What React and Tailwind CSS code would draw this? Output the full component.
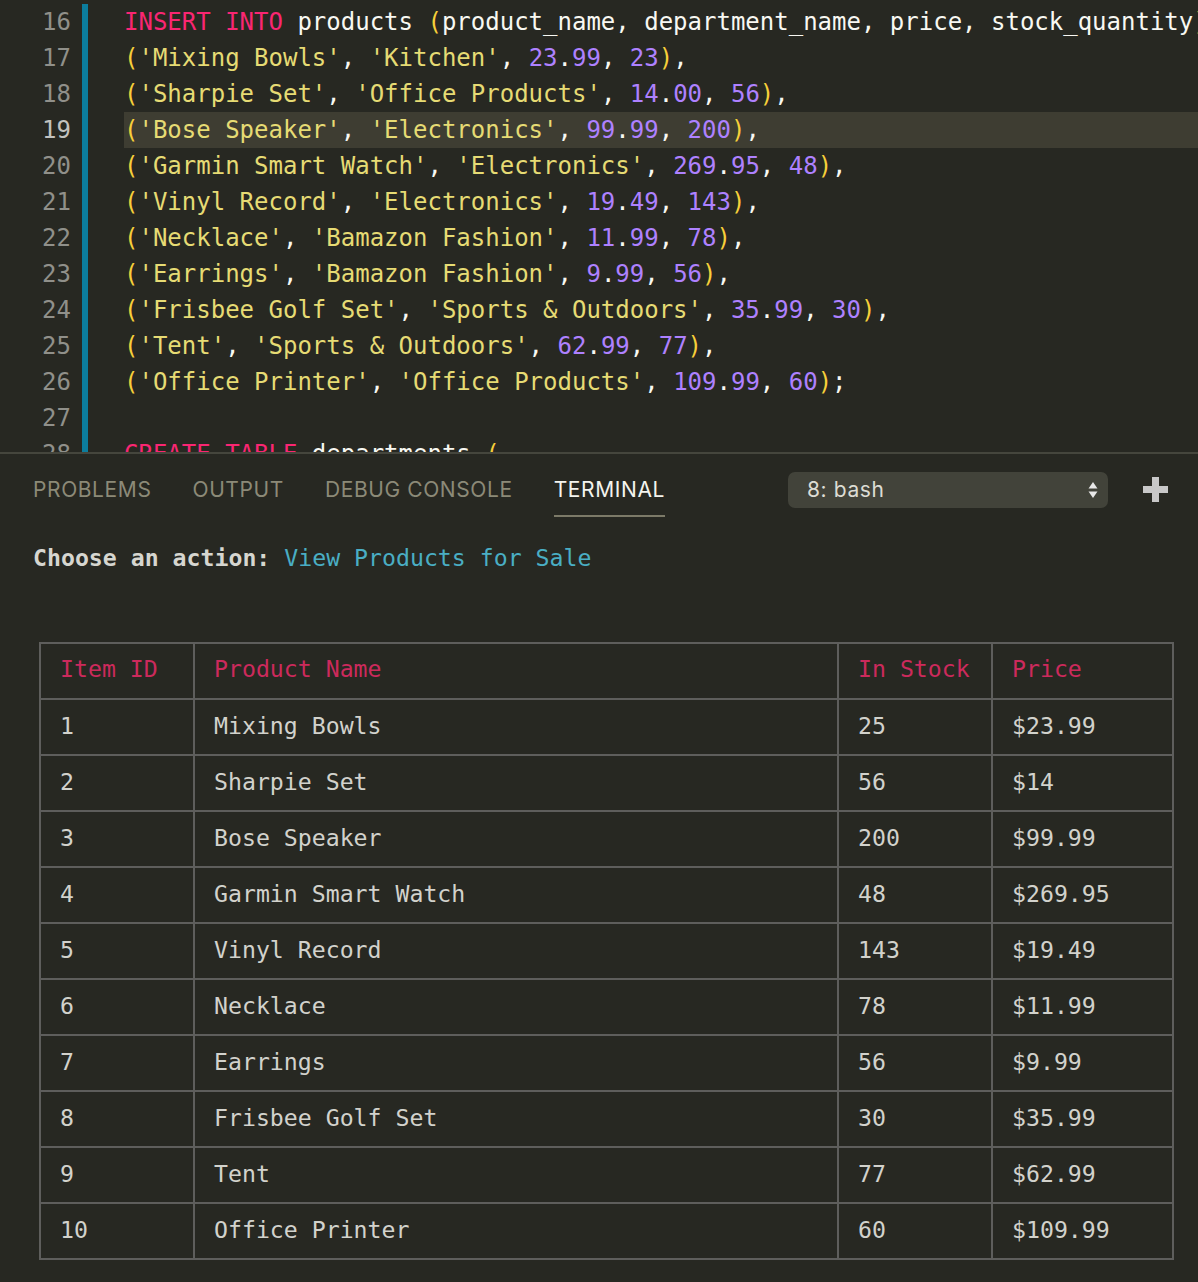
import React from "react";

const MONO = { fontFamily: '"DejaVu Sans Mono", "Liberation Mono", monospace' };
const SANS = { fontFamily: 'Inter, "Noto Sans", "Liberation Sans", sans-serif' };

const K = ({ children }) => <span className="text-[#f92672]">{children}</span>;
const W = ({ children }) => <span className="text-[#f8f8f2]">{children}</span>;
const P = ({ children }) => <span className="text-[#f6cf3a]">{children}</span>;
const S = ({ children }) => <span className="text-[#e6db74]">{children}</span>;
const N = ({ children }) => <span className="text-[#ae81ff]">{children}</span>;

function Num({ v }) {
  const [a, b] = v.split(".");
  return (
    <>
      <N>{a}</N>
      <W>.</W>
      <N>{b}</N>
    </>
  );
}

function Row({ name, dept, price, qty, last }) {
  return (
    <>
      <P>(</P>
      <S>'{name}'</S>
      <W>, </W>
      <S>'{dept}'</S>
      <W>, </W>
      <Num v={price} />
      <W>, </W>
      <N>{qty}</N>
      <P>)</P>
      <W>{last ? ";" : ","}</W>
    </>
  );
}

const rows = [
  ["Mixing Bowls", "Kitchen", "23.99", "23"],
  ["Sharpie Set", "Office Products", "14.00", "56"],
  ["Bose Speaker", "Electronics", "99.99", "200"],
  ["Garmin Smart Watch", "Electronics", "269.95", "48"],
  ["Vinyl Record", "Electronics", "19.49", "143"],
  ["Necklace", "Bamazon Fashion", "11.99", "78"],
  ["Earrings", "Bamazon Fashion", "9.99", "56"],
  ["Frisbee Golf Set", "Sports & Outdoors", "35.99", "30"],
  ["Tent", "Sports & Outdoors", "62.99", "77"],
  ["Office Printer", "Office Products", "109.99", "60"],
];

const codeLines = [
  <>
    <K>INSERT INTO</K>
    <W> products </W>
    <P>(</P>
    <W>product_name, department_name, price, stock_quantity</W>
    <P>)</P>
  </>,
  ...rows.map((r, i) => (
    <Row key={i} name={r[0]} dept={r[1]} price={r[2]} qty={r[3]} last={i === rows.length - 1} />
  )),
  <>{" "}</>,
  <>
    <K>CREATE TABLE</K>
    <W> departments </W>
    <P>(</P>
  </>,
];

const tableData = [
  ["1", "Mixing Bowls", "25", "$23.99"],
  ["2", "Sharpie Set", "56", "$14"],
  ["3", "Bose Speaker", "200", "$99.99"],
  ["4", "Garmin Smart Watch", "48", "$269.95"],
  ["5", "Vinyl Record", "143", "$19.49"],
  ["6", "Necklace", "78", "$11.99"],
  ["7", "Earrings", "56", "$9.99"],
  ["8", "Frisbee Golf Set", "30", "$35.99"],
  ["9", "Tent", "77", "$62.99"],
  ["10", "Office Printer", "60", "$109.99"],
];

export default function App() {
  return (
    <div className="w-[1198px] h-[1282px] bg-[#272822] overflow-hidden">
      {/* Editor */}
      <div className="h-[452px] overflow-hidden flex text-[24px] leading-[36px]" style={MONO}>
        <div className="w-[82px] shrink-0 pt-[4px] pr-[11px] text-right">
          {codeLines.map((_, i) => (
            <div key={i} className={`h-[36px] ${i === 3 ? "text-[#c2c2bf]" : "text-[#90908a]"}`}>
              {16 + i}
            </div>
          ))}
        </div>
        <div className="w-[6px] shrink-0 mt-[4px] bg-[#0c7d9d]" />
        <div className="w-[36px] shrink-0" />
        <div className="flex-1 min-w-0 pt-[4px]">
          {codeLines.map((l, i) => (
            <div
              key={i}
              className={`h-[36px] whitespace-pre ${i === 3 ? "bg-[#3e3d32]" : ""}`}
            >
              {l}
            </div>
          ))}
        </div>
      </div>
      <div className="h-[2px] bg-[#45463d]" />

      {/* Panel */}
      <div className="flex items-start pt-[18px] pl-[33px] pr-[30px]" style={SANS}>
        <div className="flex items-start gap-[41px] text-[21px] tracking-[0.6px] leading-[24px] text-[#8c8a78]">
          <div className="pt-[6px] pb-[14px]">PROBLEMS</div>
          <div className="pt-[6px] pb-[14px]">OUTPUT</div>
          <div className="pt-[6px] pb-[14px]">DEBUG CONSOLE</div>
          <div className="pt-[6px] pb-[13px] border-b-2 border-[#7c7a68] text-[#f4f4ee]">TERMINAL</div>
        </div>
        <div className="ml-auto w-[320px] h-[36px] rounded-[7px] bg-[#42433a] flex items-center pl-[19px] pr-[10px] text-[21px] tracking-[0.6px] text-[#dcdcd4]">
          <span>8: bash</span>
          <svg className="ml-auto" width="10" height="20" viewBox="0 0 10 20">
            <path d="M5 2 L9.5 8.5 L0.5 8.5 Z" fill="#e8e8e8" />
            <path d="M5 18 L9.5 11.5 L0.5 11.5 Z" fill="#e8e8e8" />
          </svg>
        </div>
        <div className="ml-[35px] mt-[5px] w-[25px] h-[25px] relative">
          <div className="absolute left-0 right-0 top-[9px] h-[7px] bg-[#c8c8c8]" />
          <div className="absolute top-0 bottom-0 left-[9px] w-[7px] bg-[#c8c8c8]" />
        </div>
      </div>

      {/* Terminal */}
      <div className="text-[23.2px]" style={MONO}>
        <div className="mt-[27px] pl-[33px] leading-[28px] h-[28px] whitespace-pre">
          <span className="font-bold text-[#d6d6d0]">Choose an action: </span>
          <span className="text-[#4aaec4]">View Products for Sale</span>
        </div>
        <div className="mt-[70px] ml-[39px]">
          <table className="border-collapse text-[#d2d2cc]">
            <thead>
              <tr className="h-[56px] text-[#cc2a5c]">
                <th className="w-[154px] border-2 border-[#5e5e5c] text-left font-normal pl-[19px] pb-[3px]">Item ID</th>
                <th className="w-[644px] border-2 border-[#5e5e5c] text-left font-normal pl-[19px] pb-[3px]">Product Name</th>
                <th className="w-[154px] border-2 border-[#5e5e5c] text-left font-normal pl-[19px] pb-[3px]">In Stock</th>
                <th className="w-[181px] border-2 border-[#5e5e5c] text-left font-normal pl-[19px] pb-[3px]">Price</th>
              </tr>
            </thead>
            <tbody>
              {tableData.map((r, i) => (
                <tr key={i} className="h-[56px]">
                  {r.map((c, j) => (
                    <td key={j} className="border-2 border-[#5e5e5c] pl-[19px] pb-[2px]">
                      {c}
                    </td>
                  ))}
                </tr>
              ))}
            </tbody>
          </table>
        </div>
      </div>
    </div>
  );
}
